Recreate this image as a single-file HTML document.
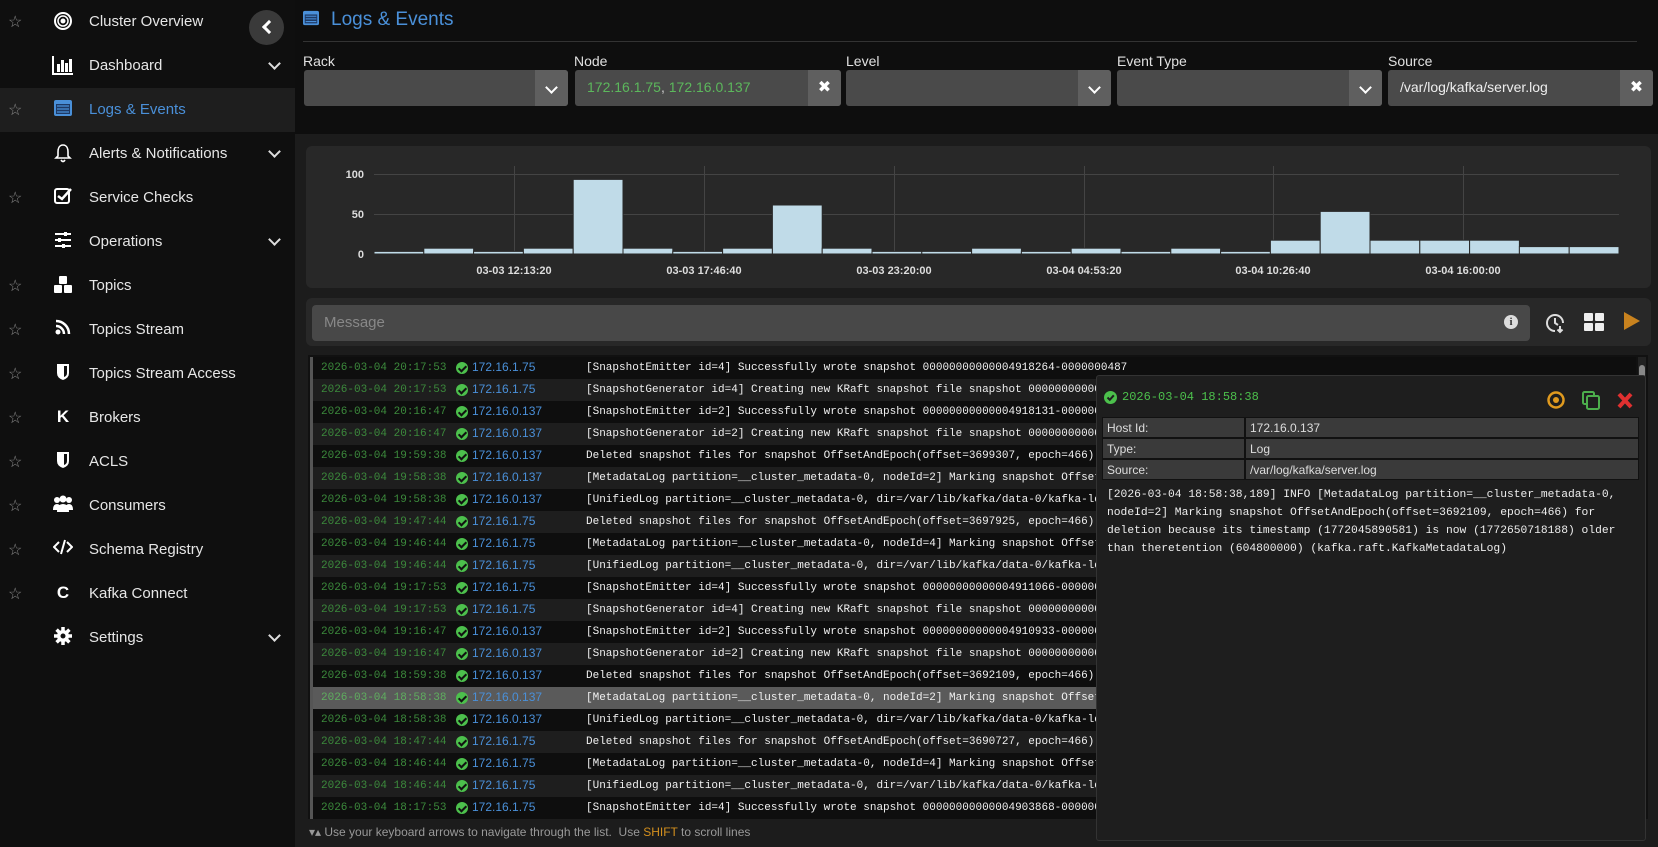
<!DOCTYPE html>
<html><head><meta charset="utf-8"><style>
*{box-sizing:border-box;margin:0;padding:0}
body{width:1658px;height:847px;background:#141414;font-family:"Liberation Sans",sans-serif;color:#ddd;position:relative;overflow:hidden}
.abs{position:absolute}
#side{left:0;top:0;width:295px;height:847px;background:#0f0f0f}
.it{position:absolute;left:0;width:295px;height:44px;font-size:15px;color:#e6e6e6}
.it .st{position:absolute;left:8px;top:12px;font-size:16px;color:#888}
.it .ic{position:absolute;left:52px;top:11px;width:22px;height:22px;text-align:center;font-weight:bold;font-size:17px;color:#fff}
.it .tx{position:absolute;left:89px;top:13px}
.it .cv{position:absolute;left:270px;top:15px;width:9px;height:9px;border-right:2px solid #ddd;border-bottom:2px solid #ddd;transform:rotate(45deg)}
#main{left:295px;top:0;width:1363px;height:847px;background:#0e0e0e}
.lbl{position:absolute;top:53px;font-size:14px;color:#e0e0e0}
.sel{position:absolute;top:70px;height:36px;background:#4a4a4a;border-radius:3px;overflow:hidden}
.sel .btn{position:absolute;right:0;top:0;width:33px;height:36px;background:#5f5f5f;color:#fff;text-align:center;line-height:36px;font-size:16px}
.sel .v{position:absolute;left:12px;top:9px;font-size:14px}
.chev{display:inline-block;width:9px;height:9px;border-right:2px solid #fff;border-bottom:2px solid #fff;transform:rotate(45deg);margin-top:9px}
.row{position:absolute;left:310px;width:1326px;height:22px;font-family:"Liberation Mono",monospace;font-size:11px;line-height:22px;white-space:nowrap;overflow:hidden;border-left:3px solid #555}
.row .ts{position:absolute;left:8px;color:#3c8a3c}
.row .ck{position:absolute;left:143px;top:5px;width:12px;height:12px;border-radius:50%;background:#4cc04c}
.row .ck:after{content:"";position:absolute;left:4px;top:2px;width:3px;height:6px;border-right:2px solid #111;border-bottom:2px solid #111;transform:rotate(45deg)}
.row .ip{position:absolute;left:159px;top:-1px;color:#4a90d9;font-family:"Liberation Sans",sans-serif;font-size:12px}
.row .m{position:absolute;left:273px;color:#f0f0f0}
</style></head><body>
<div id="side" class="abs">
<div class="it" style="top:0"><span class="st">☆</span><span class="ic"><svg width="20" height="20" viewBox="0 0 20 20"><circle cx="10" cy="10" r="8" fill="none" stroke="#fff" stroke-width="2"/><circle cx="10" cy="10" r="5" fill="none" stroke="#fff" stroke-width="1.5"/><circle cx="10" cy="10" r="2.5" fill="#fff"/></svg></span><span class="tx">Cluster Overview</span></div>
<div class="abs" style="left:249px;top:10px;width:35px;height:35px;border-radius:50%;background:#3a3a3a"><div class="abs" style="left:15px;top:12px;width:10px;height:10px;border-left:3px solid #fff;border-bottom:3px solid #fff;transform:rotate(45deg)"></div></div>
<div class="it" style="top:44px"><span class="ic"><svg width="22" height="20" viewBox="0 0 22 20"><path d="M1 1V19H21" fill="none" stroke="#fff" stroke-width="2"/><rect x="5" y="9" width="3" height="8" fill="#fff"/><rect x="9" y="5" width="3" height="12" fill="#fff"/><rect x="13" y="8" width="3" height="9" fill="#fff"/><rect x="17" y="4" width="3" height="13" fill="#fff"/></svg></span><span class="tx">Dashboard</span><span class="cv"></span></div>
<div class="it" style="top:88px;background:#1e1e1e"><span class="st">☆</span><span class="ic"><svg width="20" height="18" viewBox="0 0 20 18"><rect x="1" y="1" width="18" height="16" rx="2" fill="#4a90d9"/><rect x="3" y="5" width="14" height="10" fill="#1e3a66"/><path d="M4 7H16M4 10H16M4 13H16" stroke="#4a90d9" stroke-width="1.2"/></svg></span><span class="tx" style="color:#4a90d9">Logs &amp; Events</span></div>
<div class="it" style="top:132px"><span class="ic"><svg width="18" height="20" viewBox="0 0 18 20"><path d="M9 2C5 2 4 6 4 9V13L2 15H16L14 13V9C14 6 13 2 9 2ZM7 17Q9 20 11 17" fill="none" stroke="#fff" stroke-width="1.6"/></svg></span><span class="tx">Alerts &amp; Notifications</span><span class="cv"></span></div>
<div class="it" style="top:176px"><span class="st">☆</span><span class="ic"><svg width="18" height="18" viewBox="0 0 18 18"><rect x="1" y="2" width="14" height="14" rx="2" fill="none" stroke="#fff" stroke-width="2"/><path d="M4 9L8 12L17 2" fill="none" stroke="#fff" stroke-width="2.5"/></svg></span><span class="tx">Service Checks</span></div>
<div class="it" style="top:220px"><span class="ic"><svg width="18" height="18" viewBox="0 0 18 18"><path d="M1 3H17M1 9H17M1 15H17" stroke="#fff" stroke-width="2"/><rect x="10" y="1" width="3" height="4" fill="#fff"/><rect x="4" y="7" width="3" height="4" fill="#fff"/><rect x="8" y="13" width="3" height="4" fill="#fff"/></svg></span><span class="tx">Operations</span><span class="cv"></span></div>
<div class="it" style="top:264px"><span class="st">☆</span><span class="ic"><svg width="22" height="20" viewBox="0 0 22 20"><rect x="7" y="1" width="8" height="8" rx="1" fill="#fff"/><rect x="2" y="10" width="8" height="8" rx="1" fill="#fff"/><rect x="12" y="10" width="8" height="8" rx="1" fill="#fff"/></svg></span><span class="tx">Topics</span></div>
<div class="it" style="top:308px"><span class="st">☆</span><span class="ic"><svg width="16" height="16" viewBox="0 0 16 16"><circle cx="3" cy="13" r="2.5" fill="#fff"/><path d="M1 7A8 8 0 0 1 9 15M1 2A13 13 0 0 1 14 15" fill="none" stroke="#fff" stroke-width="2.5"/></svg></span><span class="tx">Topics Stream</span></div>
<div class="it" style="top:352px"><span class="st">☆</span><span class="ic"><svg width="14" height="18" viewBox="0 0 14 18"><path d="M1 1H13V10Q13 15 7 17Q1 15 1 10Z" fill="#fff"/><path d="M8 3H11V10Q11 13 8 14Z" fill="#0f0f0f"/></svg></span><span class="tx">Topics Stream Access</span></div>
<div class="it" style="top:396px"><span class="st">☆</span><span class="ic">K</span><span class="tx">Brokers</span></div>
<div class="it" style="top:440px"><span class="st">☆</span><span class="ic"><svg width="14" height="18" viewBox="0 0 14 18"><path d="M1 1H13V10Q13 15 7 17Q1 15 1 10Z" fill="#fff"/><path d="M8 3H11V10Q11 13 8 14Z" fill="#0f0f0f"/></svg></span><span class="tx">ACLS</span></div>
<div class="it" style="top:484px"><span class="st">☆</span><span class="ic"><svg width="22" height="18" viewBox="0 0 22 18"><circle cx="5" cy="5" r="3" fill="#fff"/><circle cx="17" cy="5" r="3" fill="#fff"/><circle cx="11" cy="4" r="3.5" fill="#fff"/><path d="M1 15Q1 9 5 9Q9 9 9 15ZM13 15Q13 9 17 9Q21 9 21 15ZM5 17Q5 9 11 9Q17 9 17 17Z" fill="#fff"/></svg></span><span class="tx">Consumers</span></div>
<div class="it" style="top:528px"><span class="st">☆</span><span class="ic"><svg width="20" height="16" viewBox="0 0 20 16"><path d="M6 3L1 8L6 13M14 3L19 8L14 13M12 1L8 15" fill="none" stroke="#fff" stroke-width="2"/></svg></span><span class="tx">Schema Registry</span></div>
<div class="it" style="top:572px"><span class="st">☆</span><span class="ic">C</span><span class="tx">Kafka Connect</span></div>
<div class="it" style="top:616px"><span class="ic"><svg width="18" height="18" viewBox="0 0 18 18"><circle cx="9" cy="9" r="6" fill="#fff"/><path d="M9 0V18M0 9H18M2.6 2.6L15.4 15.4M15.4 2.6L2.6 15.4" stroke="#fff" stroke-width="3.5"/><circle cx="9" cy="9" r="2.5" fill="#0f0f0f"/></svg></span><span class="tx">Settings</span><span class="cv"></span></div>
</div>

<div id="main" class="abs"></div>
<div class="abs" style="left:302px;top:10px"><svg width="18" height="16" viewBox="0 0 20 18"><rect x="1" y="1" width="18" height="16" rx="2" fill="#4a90d9"/><rect x="3" y="5" width="14" height="10" fill="#1e3a66"/><path d="M4 7H16M4 10H16M4 13H16" stroke="#4a90d9" stroke-width="1.2"/></svg></div>
<div class="abs" style="left:331px;top:9px;font-size:19px;color:#4a90d9">Logs &amp; Events</div>
<div class="abs" style="left:303px;top:41px;width:1334px;height:1px;background:#333"></div>

<div class="lbl" style="left:303px">Rack</div>
<div class="sel" style="left:304px;width:264px"><div class="btn"><span class="chev"></span></div></div>
<div class="lbl" style="left:574px">Node</div>
<div class="sel" style="left:575px;width:266px"><span class="v" style="color:#5cb85c">172.16.1.75<span style="color:#ccc">, </span>172.16.0.137</span><div class="btn">✖</div></div>
<div class="lbl" style="left:846px">Level</div>
<div class="sel" style="left:846px;width:265px"><div class="btn"><span class="chev"></span></div></div>
<div class="lbl" style="left:1117px">Event Type</div>
<div class="sel" style="left:1117px;width:265px"><div class="btn"><span class="chev"></span></div></div>
<div class="lbl" style="left:1388px">Source</div>
<div class="sel" style="left:1388px;width:265px"><span class="v" style="color:#eee">/var/log/kafka/server.log</span><div class="btn">✖</div></div>

<div class="abs" style="left:295px;top:134px;width:1363px;height:713px;background:#1c1c1c"></div>
<div class="abs" style="left:306px;top:146px;width:1345px;height:142px;background:#282828;border-radius:6px">
<svg width="1345" height="142" style="position:absolute;left:0;top:0">
<g stroke="#444" stroke-width="1"><line x1="68" y1="28.5" x2="1313" y2="28.5"/><line x1="68" y1="68.5" x2="1313" y2="68.5"/>
<line x1="208.5" y1="20" x2="208.5" y2="108"/><line x1="398.5" y1="20" x2="398.5" y2="108"/><line x1="588.5" y1="20" x2="588.5" y2="108"/><line x1="778.5" y1="20" x2="778.5" y2="108"/><line x1="967.5" y1="20" x2="967.5" y2="108"/><line x1="1157.5" y1="20" x2="1157.5" y2="108"/></g>
<g font-family="Liberation Sans" font-size="11" font-weight="bold" fill="#ddd" text-anchor="end"><text x="58" y="32">100</text><text x="58" y="72">50</text><text x="58" y="112">0</text></g>
<g font-family="Liberation Sans" font-size="11" font-weight="bold" fill="#ddd" text-anchor="middle"><text x="208" y="128">03-03 12:13:20</text><text x="398" y="128">03-03 17:46:40</text><text x="588" y="128">03-03 23:20:00</text><text x="778" y="128">03-04 04:53:20</text><text x="967" y="128">03-04 10:26:40</text><text x="1157" y="128">03-04 16:00:00</text></g>
<g fill="#c0dbe8" stroke="#282828" stroke-width="1" id="bars"></g>
</svg></div>
<script>
var h=[2,6,2,6,92,6,2,6,60,6,2,2,6,2,6,2,6,2,16,52,16,16,16,8,8],g=document.getElementById('bars'),s='';
for(var i=0;i<25;i++){var x=68+i*49.8,hh=h[i]*0.8+1;s+='<rect x="'+x+'" y="'+(108-hh)+'" width="49.8" height="'+hh+'"/>';}
g.innerHTML=s;
</script>

<div class="abs" style="left:306px;top:298px;width:1345px;height:48px;background:#282828;border-radius:6px"></div>
<div class="abs" style="left:312px;top:305px;width:1218px;height:36px;background:#484848;border-radius:4px;font-size:15px;color:#888;padding:9px 12px">Message<span class="abs" style="right:12px;top:10px;width:14px;height:14px;border-radius:50%;background:#ddd;color:#333;font-size:11px;font-weight:bold;text-align:center;line-height:14px;font-family:'Liberation Serif'">i</span></div>
<div class="abs" style="left:1544px;top:312px"><svg width="22" height="22" viewBox="0 0 22 22"><path d="M19 11A8 8 0 1 0 11 19" fill="none" stroke="#ddd" stroke-width="2"/><path d="M11 6V11L14 13M16 14V20M13.5 17.5L16 20L18.5 17.5" fill="none" stroke="#ddd" stroke-width="2"/></svg></div>
<div class="abs" style="left:1584px;top:313px"><svg width="20" height="18"><rect x="0" y="0" width="9" height="8" rx="1" fill="#eee"/><rect x="11" y="0" width="9" height="8" rx="1" fill="#eee"/><rect x="0" y="10" width="9" height="8" rx="1" fill="#eee"/><rect x="11" y="10" width="9" height="8" rx="1" fill="#eee"/></svg></div>
<div class="abs" style="left:1624px;top:312px"><svg width="16" height="18"><path d="M0 0L16 9L0 18Z" fill="#c8821e"/></svg></div>

<div class="abs" style="left:308px;top:355px;width:1340px;height:464px;background:#111"></div>
<div id="rows"></div>
<script>
var d=[
["2026-03-04 20:17:53","172.16.1.75","[SnapshotEmitter id=4] Successfully wrote snapshot 00000000000004918264-0000000487"],
["2026-03-04 20:17:53","172.16.1.75","[SnapshotGenerator id=4] Creating new KRaft snapshot file snapshot 00000000000004918264"],
["2026-03-04 20:16:47","172.16.0.137","[SnapshotEmitter id=2] Successfully wrote snapshot 00000000000004918131-0000000487"],
["2026-03-04 20:16:47","172.16.0.137","[SnapshotGenerator id=2] Creating new KRaft snapshot file snapshot 00000000000004918131"],
["2026-03-04 19:59:38","172.16.0.137","Deleted snapshot files for snapshot OffsetAndEpoch(offset=3699307, epoch=466)"],
["2026-03-04 19:58:38","172.16.0.137","[MetadataLog partition=__cluster_metadata-0, nodeId=2] Marking snapshot OffsetAndEpoch"],
["2026-03-04 19:58:38","172.16.0.137","[UnifiedLog partition=__cluster_metadata-0, dir=/var/lib/kafka/data-0/kafka-log"],
["2026-03-04 19:47:44","172.16.1.75","Deleted snapshot files for snapshot OffsetAndEpoch(offset=3697925, epoch=466)"],
["2026-03-04 19:46:44","172.16.1.75","[MetadataLog partition=__cluster_metadata-0, nodeId=4] Marking snapshot OffsetAndEpoch"],
["2026-03-04 19:46:44","172.16.1.75","[UnifiedLog partition=__cluster_metadata-0, dir=/var/lib/kafka/data-0/kafka-log"],
["2026-03-04 19:17:53","172.16.1.75","[SnapshotEmitter id=4] Successfully wrote snapshot 00000000000004911066-0000000487"],
["2026-03-04 19:17:53","172.16.1.75","[SnapshotGenerator id=4] Creating new KRaft snapshot file snapshot 00000000000004911066"],
["2026-03-04 19:16:47","172.16.0.137","[SnapshotEmitter id=2] Successfully wrote snapshot 00000000000004910933-0000000487"],
["2026-03-04 19:16:47","172.16.0.137","[SnapshotGenerator id=2] Creating new KRaft snapshot file snapshot 00000000000004910933"],
["2026-03-04 18:59:38","172.16.0.137","Deleted snapshot files for snapshot OffsetAndEpoch(offset=3692109, epoch=466)"],
["2026-03-04 18:58:38","172.16.0.137","[MetadataLog partition=__cluster_metadata-0, nodeId=2] Marking snapshot OffsetAndEpoch"],
["2026-03-04 18:58:38","172.16.0.137","[UnifiedLog partition=__cluster_metadata-0, dir=/var/lib/kafka/data-0/kafka-log"],
["2026-03-04 18:47:44","172.16.1.75","Deleted snapshot files for snapshot OffsetAndEpoch(offset=3690727, epoch=466)"],
["2026-03-04 18:46:44","172.16.1.75","[MetadataLog partition=__cluster_metadata-0, nodeId=4] Marking snapshot OffsetAndEpoch"],
["2026-03-04 18:46:44","172.16.1.75","[UnifiedLog partition=__cluster_metadata-0, dir=/var/lib/kafka/data-0/kafka-log"],
["2026-03-04 18:17:53","172.16.1.75","[SnapshotEmitter id=4] Successfully wrote snapshot 00000000000004903868-0000000487"]];
var o='';for(var i=0;i<d.length;i++){var bg=i==15?'#5a5a5a':(i%2?'#1e1e1e':'#0e0e0e');var tc=i==15?'#5fae5f':'#3c8a3c';
o+='<div class="row" style="top:'+(357+i*22)+'px;background:'+bg+'"><span class="ts" style="color:'+tc+'">'+d[i][0]+'</span><span class="ck"></span><span class="ip">'+d[i][1]+'</span><span class="m">'+d[i][2]+'</span></div>';}
document.getElementById('rows').innerHTML=o;
</script>
<div class="abs" style="left:1638px;top:357px;width:8px;height:462px;background:#222"><div style="margin:8px 1px;height:14px;background:#888;border-radius:3px"></div></div>

<div class="abs" style="left:1096px;top:375px;width:550px;height:466px;background:#1e1e1e;border:1px solid #333;border-radius:3px">
<svg class="abs" style="left:7px;top:15px" width="13" height="13"><circle cx="6.5" cy="6.5" r="6.5" fill="#4cc04c"/><path d="M3.5 6.5L5.8 8.8L9.8 4.3" fill="none" stroke="#1e1e1e" stroke-width="2"/></svg>
<span class="abs" style="left:25px;top:14px;font-family:'Liberation Mono',monospace;font-size:12px;color:#4cc04c">2026-03-04 18:58:38</span>
<svg class="abs" style="left:448px;top:14px" width="90" height="22"><circle cx="11" cy="10" r="7.5" fill="none" stroke="#e09a1e" stroke-width="2.5"/><circle cx="11" cy="10" r="3" fill="#e09a1e"/><rect x="38" y="2" width="11" height="12" rx="1.5" fill="none" stroke="#4cae4c" stroke-width="2"/><rect x="42" y="6" width="12" height="13" rx="1.5" fill="#1e1e1e" stroke="#4cae4c" stroke-width="2"/><path d="M74 4L86 17M86 4L74 17" stroke="#e03030" stroke-width="4"/></svg>
<div class="abs" style="left:5px;top:41px;width:537px;font-size:12px;color:#ddd">
<div style="display:flex;height:21px;border:1px solid #111;background:#3a3a3a"><div style="width:143px;border-right:2px solid #111;padding:3px 4px">Host Id:</div><div style="padding:3px 4px">172.16.0.137</div></div>
<div style="display:flex;height:21px;border:1px solid #111;background:#3a3a3a"><div style="width:143px;border-right:2px solid #111;padding:3px 4px">Type:</div><div style="padding:3px 4px">Log</div></div>
<div style="display:flex;height:21px;border:1px solid #111;background:#3a3a3a"><div style="width:143px;border-right:2px solid #111;padding:3px 4px">Source:</div><div style="padding:3px 4px">/var/log/kafka/server.log</div></div>
</div>
<div class="abs" style="left:10px;top:110px;width:530px;font-family:'Liberation Mono',monospace;font-size:11.3px;line-height:18px;color:#eee;white-space:pre">[2026-03-04 18:58:38,189] INFO [MetadataLog partition=__cluster_metadata-0,
nodeId=2] Marking snapshot OffsetAndEpoch(offset=3692109, epoch=466) for
deletion because its timestamp (1772045890581) is now (1772650718188) older
than theretention (604800000) (kafka.raft.KafkaMetadataLog)</div>
</div>

<div class="abs" style="left:309px;top:825px;font-size:12px;color:#999">▾▴ Use your keyboard arrows to navigate through the list.&nbsp; Use <span style="color:#d4901e">SHIFT</span> to scroll lines</div>
</body></html>
